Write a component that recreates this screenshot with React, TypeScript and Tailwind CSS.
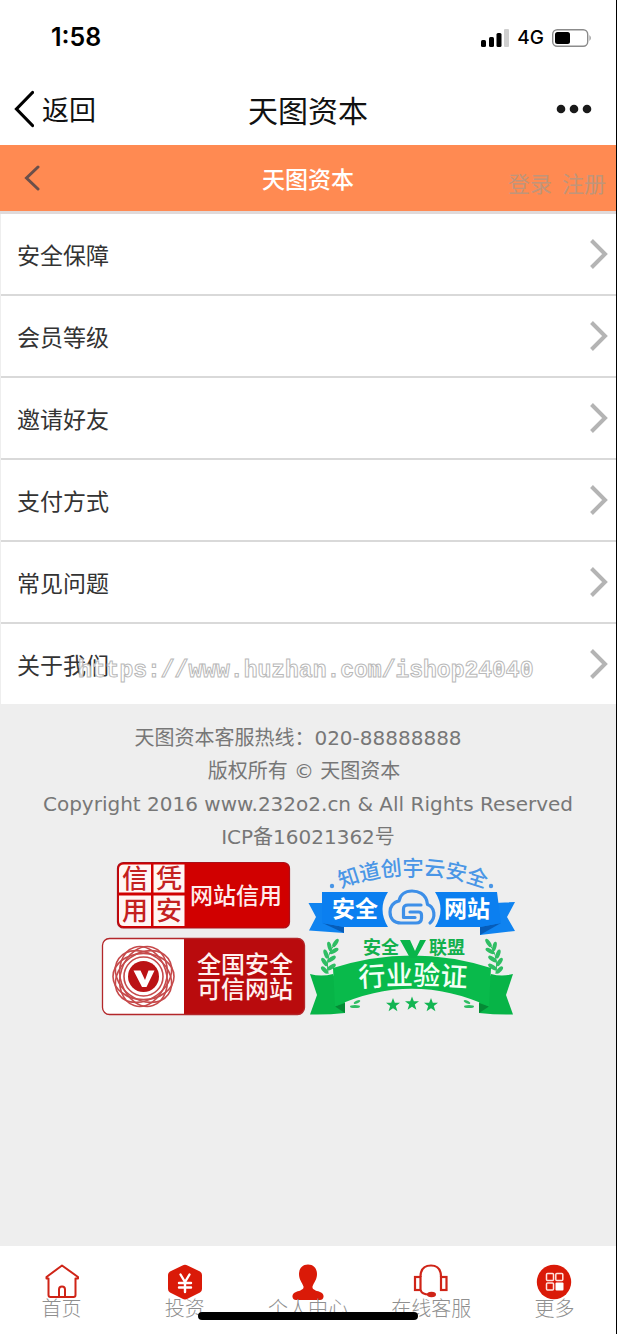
import type { ReactNode } from "react";

const menuItems = ["安全保障", "会员等级", "邀请好友", "支付方式", "常见问题", "关于我们"];

const rosette = [0, 36, 72, 108, 144];

const STAR = "M0 -7 L1.8 -2.2 L7 -2.2 L2.8 1 L4.4 6.2 L0 3.2 L-4.4 6.2 L-2.8 1 L-7 -2.2 L-1.8 -2.2 Z";

function StatusBar() {
  return (
    <div className="flex h-[76px] items-center justify-between pr-6 pl-[51px] text-black">
      <span className="font-[Inter,sans-serif] text-[25px] font-semibold">1:58</span>
      <div className="flex items-center gap-2">
        <svg width="28" height="18" viewBox="0 0 28 18" aria-hidden="true">
          <rect x="0" y="11" width="5" height="7" rx="1.5" />
          <rect x="8" y="8" width="5" height="10" rx="1.5" />
          <rect x="15.5" y="4" width="5" height="14" rx="1.5" />
          <rect x="23" y="0" width="5" height="18" rx="1" fill="#cfcfcf" />
        </svg>
        <span className="font-[Inter,sans-serif] text-[19px] font-medium">4G</span>
        <svg width="40" height="18" viewBox="0 0 40 18" aria-hidden="true">
          <rect x="0.7" y="0.7" width="35" height="16.6" rx="4.5" fill="none" stroke="#8b8b8b" strokeWidth="1.4" />
          <rect x="3" y="3" width="15" height="12" rx="2.5" />
          <path d="M37.5 6 Q40 9 37.5 12 Z" fill="#8b8b8b" />
        </svg>
      </div>
    </div>
  );
}

function AppBar() {
  return (
    <div className="grid h-[69px] grid-cols-[1fr_auto_1fr] items-center px-3.5 pb-1 text-[#111]">
      <button type="button" className="flex items-center gap-2 justify-self-start text-[27px] leading-10">
        <svg width="20" height="38" viewBox="0 0 20 38" fill="none" stroke="#000" strokeWidth="3.2" strokeLinecap="round" aria-hidden="true">
          <path d="M18.5 2.5 L2.5 19 L18.5 35.5" />
        </svg>
        返回
      </button>
      <h1 className="text-[30px] leading-8">天图资本</h1>
      <button type="button" aria-label="菜单" className="justify-self-end pr-2.5">
        <svg width="36" height="10" viewBox="0 0 36 10" fill="#1a1a1a">
          <circle cx="5" cy="5" r="4.3" />
          <circle cx="18" cy="5" r="4.3" />
          <circle cx="31" cy="5" r="4.3" />
        </svg>
      </button>
    </div>
  );
}

function PageHeader() {
  return (
    <header className="grid h-[69px] grid-cols-[1fr_auto_1fr] items-center border-b-3 border-[#e0dada] bg-[#ff8a52] px-2.5">
      <a href="#back" aria-label="返回" className="justify-self-start pl-3.5">
        <svg width="16" height="26" viewBox="0 0 16 26" fill="none" stroke="#6b4f4a" strokeWidth="3" strokeLinecap="round">
          <path d="M14 2 L2.5 13 L14 24" />
        </svg>
      </a>
      <h2 className="text-[23px] leading-8 font-medium text-white">天图资本</h2>
      <div className="flex gap-2.5 justify-self-end pt-2 text-[22px] text-[#c0957a]">
        <a href="#login">登录</a>
        <a href="#register">注册</a>
      </div>
    </header>
  );
}

function CreditBadge() {
  return (
    <svg width="206" height="80" viewBox="0 0 206 80" className="font-['Noto_Sans_CJK_SC',sans-serif]">
      <rect x="16.5" y="5.5" width="172" height="65.5" rx="6" fill="#d10000" stroke="#ab1019" strokeWidth="1.2" />
      <g fill="#fff6f4">
        <path d="M23 7.5 H50 V35.5 H18 V12 Q18 7.5 23 7.5 Z" />
        <rect x="52.5" y="7.5" width="31" height="28" />
        <path d="M18 38.5 H50 V69 H23 Q18 69 18 64 Z" />
        <rect x="52.5" y="38.5" width="31" height="30.5" />
      </g>
      <g fill="#c4211f" fontSize="26" fontWeight="500" textAnchor="middle">
        <text x="34" y="31">信</text>
        <text x="68" y="31">凭</text>
        <text x="34" y="63">用</text>
        <text x="68" y="63">安</text>
      </g>
      <text x="135" y="47" fill="#ffeceb" fontSize="23" fontWeight="500" textAnchor="middle">网站信用</text>
    </svg>
  );
}

function CloudBadge() {
  return (
    <svg width="206" height="80" viewBox="0 0 206 80" className="overflow-visible font-['Noto_Sans_CJK_SC',sans-serif]">
      <path id="cloud-arc" d="M30 32 A200 200 0 0 1 178 32" fill="none" />
      <text fill="#4a96e6" fontSize="21" fontWeight="500" textAnchor="middle">
        <textPath href="#cloud-arc" startOffset="50%">知道创宇云安全</textPath>
      </text>
      <circle cx="23" cy="29" r="2.2" fill="#4a96e6" />
      <circle cx="182" cy="29" r="2.2" fill="#4a96e6" />
      <path d="M-0.5 46 L20 46 L35 64 V76 L0 73.5 L7 60 Z" fill="#0f83f0" />
      <path d="M206 45 L186 46 L171 64 V78 L206 74 L198 60 Z" fill="#0f83f0" />
      <path d="M13.5 66 L35 70 V76 Z" fill="#075cb8" />
      <path d="M192 66 L171 70 V78 Z" fill="#075cb8" />
      <path d="M13 35 H79 Q68 52 79 70 H35 L13 66 Z" fill="#0b7ff0" />
      <path d="M126 35 H188 L192 66 L171 70 H126 Q137 52 126 35 Z" fill="#0b7ff0" />
      <g fill="none" stroke="#3d8fe8" strokeLinecap="round" strokeLinejoin="round">
        <path d="M121 66 C127 61 126 50 118.500 47.500 C117.500 36 108 34 103 34 C96 34 91 38 90 44 C84 45 81 50 81 55 C81 62 85 66 92 66 H107 Q112.500 66 112.500 61 V58 Q112.500 55 109.500 55 H101" strokeWidth="3.2" />
        <path d="M112 48 H99 Q94.500 48 94.500 52 V60.500 H106" strokeWidth="3.200" />
      </g>
      <g fill="#fff" fontSize="23" fontWeight="700" textAnchor="middle">
        <text x="46" y="60">安全</text>
        <text x="158" y="60">网站</text>
      </g>
    </svg>
  );
}

function TrustedSiteBadge() {
  return (
    <svg width="206" height="80" viewBox="0 0 206 80" className="font-['Noto_Sans_CJK_SC',sans-serif]">
      <rect x="1.5" y="1.5" width="202" height="76" rx="7" fill="#b90b0d" />
      <path d="M8 1.5 H83 V77.5 H8 Q1.5 77.5 1.5 71 V8 Q1.5 1.5 8 1.5 Z" fill="#fff" />
      <rect x="1.5" y="1.5" width="202" height="76" rx="7" fill="none" stroke="#b3272a" strokeWidth="1.3" />
      <g fill="none" stroke="#c64a4b" strokeWidth="1.6">
        {rosette.map((angle) => (
          <ellipse key={angle} cx="42.5" cy="39.5" rx="30.5" ry="23" transform={`rotate(${angle} 42.5 39.5)`} />
        ))}
      </g>
      <circle cx="42.5" cy="39.5" r="19.5" fill="#fff" stroke="#c64a4b" strokeWidth="1.6" />
      <circle cx="42.5" cy="39.5" r="15.5" fill="#bb1215" />
      <path d="M32.5 33.5 H39.5 L44 43 L47.5 33.5 H53.5 L45.5 50 H41 Z" fill="#fff" />
      <g fill="#fff0ee" fontSize="24" fontWeight="500" textAnchor="middle">
        <text x="144" y="36">全国安全</text>
        <text x="144" y="61">可信网站</text>
      </g>
    </svg>
  );
}

function Laurel() {
  return (
    <g fill="#2fbd63">
      <path d="M28 5 Q16 16 19 37" fill="none" stroke="#2fbd63" strokeWidth="1" />
      <ellipse cx="26.5" cy="6" rx="4.8" ry="2" transform="rotate(-55 26.5 6)" />
      <ellipse cx="20.5" cy="9.5" rx="4.8" ry="2" transform="rotate(-105 20.5 9.5)" />
      <ellipse cx="25" cy="14" rx="5" ry="2.1" transform="rotate(-30 25 14)" />
      <ellipse cx="17" cy="17" rx="4.8" ry="2.1" transform="rotate(70 17 17)" />
      <ellipse cx="22.5" cy="22" rx="5" ry="2.1" transform="rotate(-35 22.5 22)" />
      <ellipse cx="15.5" cy="25" rx="4.8" ry="2.1" transform="rotate(55 15.5 25)" />
      <ellipse cx="22.5" cy="30" rx="5" ry="2.1" transform="rotate(-35 22.5 30)" />
      <ellipse cx="15.5" cy="33" rx="4.5" ry="2.1" transform="rotate(45 15.5 33)" />
      <ellipse cx="48" cy="65" rx="3.5" ry="1.4" transform="rotate(-25 48 65)" />
      <ellipse cx="46" cy="69.5" rx="5" ry="1.5" />
    </g>
  );
}

function AllianceBadge() {
  return (
    <svg width="206" height="80" viewBox="0 0 206 80" className="overflow-visible font-['Noto_Sans_CJK_SC',sans-serif]">
      <Laurel />
      <g transform="translate(206 0) scale(-1 1)">
        <Laurel />
      </g>
      <path d="M1 37 Q12 40 24 37 L36 66 L36 76 Q18 78 1 77.5 L8 58 Z" fill="#07b447" />
      <path d="M204 37 Q193 40 182 37 L170 66 L170 76 Q188 78 204 77.500 L197 58 Z" fill="#07b447" />
      <path d="M26 69.500 L36 66 V76 Z" fill="#058a35" />
      <path d="M180 69.500 L170 66 V76 Z" fill="#058a35" />
      <path d="M24 31 Q103 6 182 31 L180 69.500 Q103 34 26 69.500 Z" fill="#09ba4b" />
      <path id="alliance-arc" d="M40 51 Q103 45 168 51" fill="none" />
      <text fill="#f2fff5" fontSize="27" fontWeight="500" textAnchor="middle">
        <textPath href="#alliance-arc" startOffset="50%">行业验证</textPath>
      </text>
      <g fill="#12b04c" fontSize="18" fontWeight="700" textAnchor="middle">
        <text x="72" y="17">安全</text>
        <text x="138" y="17">联盟</text>
      </g>
      <path d="M91 3 H101 L106 14 L111 3 H117 L107 21 H101 Z" fill="#09b54a" />
      <g fill="#12b552">
        <path d={STAR} transform="translate(84 68)" />
        <path d={STAR} transform="translate(103 66.500)" />
        <path d={STAR} transform="translate(122 68)" />
      </g>
    </svg>
  );
}

function TabIcon({ children }: { children: ReactNode }) {
  return (
    <svg width="36" height="36" viewBox="0 0 36 36" aria-hidden="true">
      {children}
    </svg>
  );
}

const tabs = [
  {
    label: "首页",
    icon: (
      <TabIcon>
        <g fill="none" stroke="#cf2417" strokeWidth="2" strokeLinejoin="round" strokeLinecap="round">
          <path d="M4.5 14.5 H2.5 L2.5 13 L18 1.5 L34 13 V14.5 H31.5 V31 Q31.5 33 29.5 33 H6.5 Q4.5 33 4.5 31 Z" />
          <path d="M15 33 V25.5 Q15 22.5 18 22.5 Q21 22.5 21 25.5 V33" />
        </g>
      </TabIcon>
    ),
  },
  {
    label: "投资",
    icon: (
      <TabIcon>
        <path d="M15.5 1.5 Q18 0 20.5 1.5 L33 7.5 Q35 8.5 35 11 V25 Q35 27.5 33 28.5 L20.5 34.8 Q18 36 15.5 34.8 L3 28.5 Q1 27.5 1 25 V11 Q1 8.5 3 7.5 Z" fill="#da1a08" />
        <path d="M13.5 10.5 L18 18 L22.5 10.500 M18 18 V28 M12 19 H24 M12 23.500 H24" fill="none" stroke="#fff" strokeWidth="2.4" strokeLinecap="round" />
      </TabIcon>
    ),
  },
  {
    label: "个人中心",
    icon: (
      <TabIcon>
        <path d="M18 0.5 C24 0.5 27 5 27 10 C27 16 24 18 22.5 22.5 C22 25.5 25 26.5 30 28 Q34 29.5 33.5 33 Q33 36 30 36 H6 Q3 36 2.5 33 Q2 29.5 6 28 C11 26.5 14 25.5 13.5 22.5 C12 18 9 16 9 10 C9 5 12 0.5 18 0.5 Z" fill="#da1a08" />
      </TabIcon>
    ),
  },
  {
    label: "在线客服",
    icon: (
      <TabIcon>
        <g fill="none" stroke="#cf2417" strokeWidth="2.2">
          <rect x="2" y="13" width="5.5" height="13" />
          <rect x="28" y="13" width="5.5" height="13" />
          <path d="M7.5 13 V12 Q8 1.5 18 1.5 Q27.500 1.5 28 12 V13" />
          <path d="M7.500 26 Q9 30.5 16 30.500" />
        </g>
        <ellipse cx="18.5" cy="30.5" rx="4.5" ry="2.8" fill="#cf2417" />
      </TabIcon>
    ),
  },
  {
    label: "更多",
    icon: (
      <TabIcon>
        <circle cx="18" cy="18" r="17.2" fill="#da1a08" />
        <g fill="none" stroke="#ffe3df" strokeWidth="1.5">
          <rect x="10.5" y="9.5" width="7" height="7" rx="1" />
          <rect x="19.8" y="9.5" width="7" height="7" rx="1" />
          <rect x="10.5" y="19" width="7" height="7" rx="1" />
        </g>
        <rect x="19.5" y="18.5" width="8" height="8" rx="1" fill="#fff" />
      </TabIcon>
    ),
  },
];

function TabBar() {
  return (
    <nav className="relative grid h-[88px] grid-cols-5 bg-white pt-[18px]">
      {tabs.map((tab) => (
        <a key={tab.label} href="#tab" className="flex flex-col items-center text-[20px] leading-5 font-light text-[#8f8f8f]">
          {tab.icon}
          <span className="-mt-0.5">{tab.label}</span>
        </a>
      ))}
      <div className="absolute bottom-3.5 left-1/2 h-2 w-[220px] -translate-x-1/2 rounded-full bg-black" />
    </nav>
  );
}

export default function App() {
  return (
    <div className="flex min-h-screen flex-col border-r border-black bg-white font-['Noto_Sans_CJK_SC',sans-serif]">
      <StatusBar />
      <AppBar />
      <PageHeader />
      <main className="flex-1 bg-[#eee]">
        <div className="relative border-l border-[#eee] bg-white">
          <ul>
            {menuItems.map((item) => (
              <li key={item} className="border-b-2 border-[#d9d9d9] last:border-b-0">
                <a href="#item" className="flex h-20 items-center justify-between pr-2 pl-4 text-[23px] text-[#333]">
                  {item}
                  <svg width="18" height="30" viewBox="0 0 18 30" fill="none" stroke="#b4b4b4" strokeWidth="4" aria-hidden="true">
                    <path d="M1.5 1.5 L15 15 L1.5 28.5" />
                  </svg>
                </a>
              </li>
            ))}
          </ul>
          <p className="pointer-events-none absolute bottom-4 left-[77px] font-['Liberation_Mono',monospace] text-[23px] font-bold text-white/80 [-webkit-text-stroke:1px_#b9b9b9]">
            https://www.huzhan.com/ishop24040
          </p>
        </div>
        <footer className="flex flex-col items-center pt-[18px] text-center font-['DejaVu_Sans','Noto_Sans_CJK_SC',sans-serif] text-xl leading-[33px] text-[#777]">
          <p className="pr-5">天图资本客服热线：020-88888888</p>
          <p className="pr-2">版权所有 © 天图资本</p>
          <p>Copyright 2016 www.232o2.cn &amp; All Rights Reserved</p>
          <p>ICP备16021362号</p>
          <div className="mt-[3px] grid grid-cols-2 gap-x-0.5">
            <CreditBadge />
            <CloudBadge />
            <TrustedSiteBadge />
            <AllianceBadge />
          </div>
        </footer>
      </main>
      <TabBar />
    </div>
  );
}
